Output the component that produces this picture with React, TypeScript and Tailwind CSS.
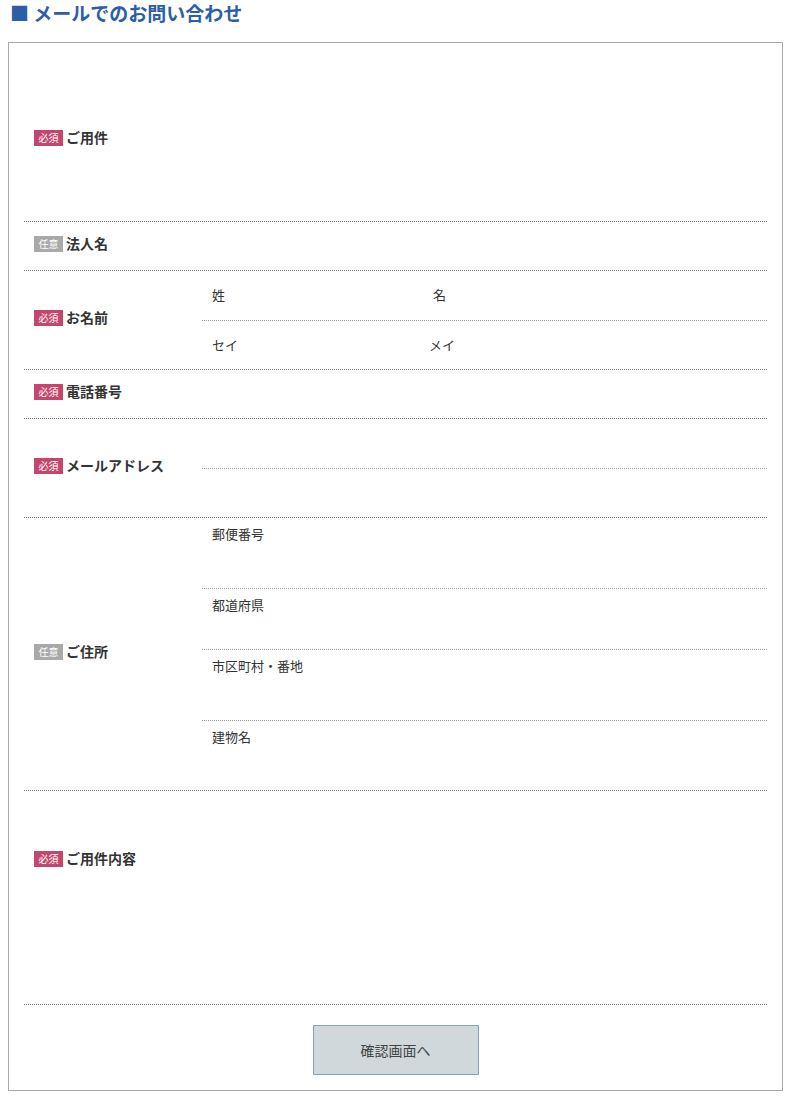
import React from "react";

const font = { fontFamily: '"Noto Sans CJK JP", "Noto Sans", sans-serif' };

function Badge({ req }: { req: boolean }) {
  return (
    <span
      className={`inline-flex items-center justify-center w-[29px] h-[16px] text-[10px] leading-none text-white mr-[3px] ${
        req ? "bg-[#c5466c]" : "bg-[#a9a9a9]"
      }`}
    >
      {req ? "必須" : "任意"}
    </span>
  );
}

function Label({ req, text, top }: { req: boolean; text: string; top?: string }) {
  return (
    <div
      className={`w-[178px] shrink-0 flex pl-[10px] ${
        top ? `items-start ${top}` : "items-center pb-[4px]"
      }`}
    >
      <div className="flex items-center h-[16px]">
        <Badge req={req} />
        <span className="text-[14px] font-bold text-[#333] leading-none mb-[3px]">{text}</span>
      </div>
    </div>
  );
}

const rowCls = "flex border-b border-dotted border-[#777]";

export default function App() {
  return (
    <div className="w-[795px] h-[1109px] bg-white" style={font}>
      <h2 className="pl-[10px] pt-[1px] h-[42px] text-[19px] font-bold text-[#2c5ea6] leading-[24px]">
        ■ メールでのお問い合わせ
      </h2>
      <div className="mx-[8px] w-[775px] border border-[#aaa] px-[15px] pb-[15px]">
        <div className={`${rowCls} h-[179px]`}>
          <Label req text="ご用件" top="pt-[87px]" />
        </div>
        <div className={`${rowCls} h-[49px]`}>
          <Label req={false} text="法人名" />
        </div>
        <div className={`${rowCls} h-[99px]`}>
          <Label req text="お名前" />
          <div className="flex-1 flex flex-col">
            <div className="h-[50px] flex items-center border-b border-dotted border-[#999] text-[13px] text-[#333] pb-[1px]">
              <span className="w-[227px] pl-[10px]">姓</span>
              <span className="pl-[4px]">名</span>
            </div>
            <div className="flex-1 flex items-center text-[13px] text-[#333]">
              <span className="w-[227px] pl-[10px]">セイ</span>
              <span>メイ</span>
            </div>
          </div>
        </div>
        <div className={`${rowCls} h-[49px]`}>
          <Label req text="電話番号" />
        </div>
        <div className={`${rowCls} h-[99px]`}>
          <Label req text="メールアドレス" />
          <div className="flex-1 flex flex-col">
            <div className="h-[50px] border-b border-dotted border-[#999]"></div>
            <div className="flex-1"></div>
          </div>
        </div>
        <div className={`${rowCls} h-[273px]`}>
          <Label req={false} text="ご住所" />
          <div className="flex-1 flex flex-col text-[13px] text-[#333]">
            <div className="h-[71px] border-b border-dotted border-[#999] pl-[10px] pt-[6px]">郵便番号</div>
            <div className="h-[61px] border-b border-dotted border-[#999] pl-[10px] pt-[6px]">都道府県</div>
            <div className="h-[71px] border-b border-dotted border-[#999] pl-[10px] pt-[6px]">市区町村・番地</div>
            <div className="flex-1 pl-[10px] pt-[6px]">建物名</div>
          </div>
        </div>
        <div className={`${rowCls} h-[214px]`}>
          <Label req text="ご用件内容" top="pt-[60px]" />
        </div>
        <div className="flex justify-center pt-[20px]">
          <button className="w-[166px] h-[50px] bg-[#d0d8dc] border border-[#86a3be] text-[14px] text-[#444]">
            確認画面へ
          </button>
        </div>
      </div>
    </div>
  );
}
